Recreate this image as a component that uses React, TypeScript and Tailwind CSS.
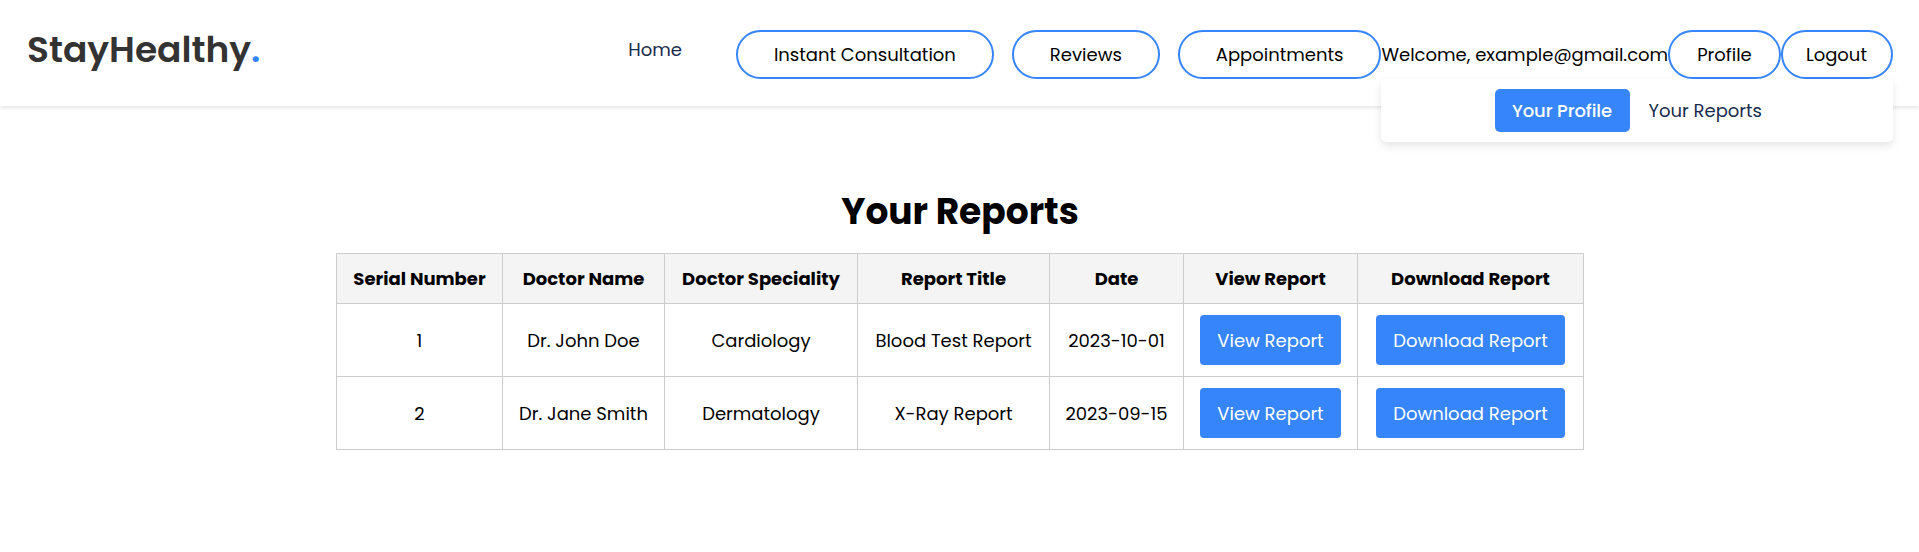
type Report = {
  id: number;
  doctor: string;
  speciality: string;
  title: string;
  date: string;
};

const reports: Report[] = [
  { id: 1, doctor: "Dr. John Doe", speciality: "Cardiology", title: "Blood Test Report", date: "2023-10-01" },
  { id: 2, doctor: "Dr. Jane Smith", speciality: "Dermatology", title: "X-Ray Report", date: "2023-09-15" },
];

const columns = [
  { label: "Serial Number", width: "w-[166px]" },
  { label: "Doctor Name", width: "w-[162px]" },
  { label: "Doctor Speciality", width: "w-[193px]" },
  { label: "Report Title", width: "w-[192px]" },
  { label: "Date", width: "w-[134px]" },
  { label: "View Report", width: "w-[174px]" },
  { label: "Download Report", width: "w-[226px]" },
];

const pill = "flex h-[49px] items-center justify-center rounded-full border-2 border-[#3685fb] bg-white";

function NavBar() {
  return (
    <nav className="flex h-[106px] items-start justify-between bg-white pr-[26px] pl-[27px] shadow-[0_2px_4px_rgba(0,0,0,0.1)]">
      <a href="#" className="pt-[23px] text-[36px] leading-[54px] font-semibold text-[#333]">
        StayHealthy<span className="text-[#3685fb]">.</span>
      </a>
      <div className="flex items-start pt-[30px]">
        <a href="#" className="mr-[54px] pt-[6px] text-[#172b4d]">Home</a>
        <div className="flex gap-[18px]">
          <button className={`${pill} px-9`}>Instant Consultation</button>
          <button className={`${pill} px-9`}>Reviews</button>
          <button className={`${pill} px-9`}>Appointments</button>
        </div>
        <div className="relative">
          <div className="flex items-center">
            <span className="whitespace-nowrap">Welcome, example@gmail.com</span>
            <button className={`${pill} w-[112.7px]`}>Profile</button>
            <button className={`${pill} w-[112.2px] pr-px`}>Logout</button>
          </div>
          <div className="absolute inset-x-0 top-full flex h-[63px] items-center justify-center rounded-[5px] bg-white pl-px shadow-[0_4px_8px_rgba(0,0,0,0.1)]">
            <a href="#" className="w-[135px] rounded-[5px] bg-[#3685fb] py-2 pr-0.5 text-center font-medium tracking-[-0.1px] text-white">Your Profile</a>
            <a href="#" className="px-[18px] py-2 text-[#172b4d]">Your Reports</a>
          </div>
        </div>
      </div>
    </nav>
  );
}

function ReportsTable() {
  const cell = "border border-[#ccc] py-0 pr-0 pl-px";
  const action = "h-[50px] rounded-[4px] bg-[#3685fb] pl-px text-white align-middle";
  return (
    <table className="mx-auto mt-[14px] w-[1247.35px] table-fixed border-collapse text-center">
      <thead>
        <tr className="h-[50px] bg-[#f4f4f4]">
          {columns.map((c) => (
            <th key={c.label} className={`${cell} ${c.width} font-bold`}>{c.label}</th>
          ))}
        </tr>
      </thead>
      <tbody>
        {reports.map((r) => (
          <tr key={r.id} className="h-[73px]">
            <td className={cell}>{r.id}</td>
            <td className={cell}>{r.doctor}</td>
            <td className={cell}>{r.speciality}</td>
            <td className={cell}>{r.title}</td>
            <td className={cell}>{r.date}</td>
            <td className="border border-[#ccc] p-0"><button className={`${action} w-[141px]`}>View Report</button></td>
            <td className="border border-[#ccc] p-0"><button className={`${action} w-[189px]`}>Download Report</button></td>
          </tr>
        ))}
      </tbody>
    </table>
  );
}

export default function App() {
  return (
    <div className="min-h-screen bg-white font-[Poppins,Inter,sans-serif] text-[18px] leading-[27px] text-black">
      <NavBar />
      <main className="pt-[79px]">
        <h1 className="pl-px text-center text-[36px] leading-[54px] font-bold">Your Reports</h1>
        <ReportsTable />
      </main>
    </div>
  );
}
